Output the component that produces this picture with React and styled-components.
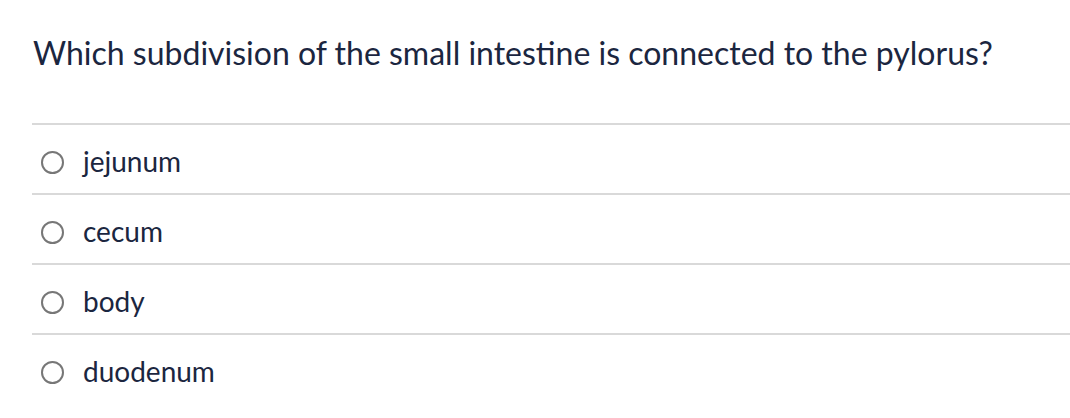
import React from "react";
import styled, { createGlobalStyle } from "styled-components";

const GlobalStyle = createGlobalStyle`
  html, body {
    margin: 0;
    padding: 0;
    background: #ffffff;
  }
  body {
    font-family: Lato, "Noto Sans", sans-serif;
    color: #1b2640;
  }
`;

const Wrapper = styled.div`
  padding: 30px 0 0 32px;
`;

const Question = styled.h1`
  margin: 0 0 0 1px;
  font-size: 32px;
  font-weight: 400;
  line-height: 46px;
  height: 93px;
`;

const Options = styled.div`
  display: flex;
  flex-direction: column;
`;

const Option = styled.label`
  display: flex;
  align-items: center;
  gap: 19px;
  height: 64px;
  padding: 4px 0 0 9px;
  border-top: 2px solid #d9d9d9;
  font-size: 28px;
  cursor: pointer;
`;

const Radio = styled.input.attrs({ type: "radio" })`
  appearance: none;
  -webkit-appearance: none;
  display: block;
  box-sizing: border-box;
  width: 23px;
  min-width: 23px;
  height: 23px;
  margin: 3px 0 0 0;
  padding: 0;
  border-radius: 50%;
  border: 2px solid #777777;
  background: #ffffff;
  flex: none;
`;

const Label = styled.span`
  line-height: 1;
`;

const answers = ["jejunum", "cecum", "body", "duodenum"];

const App = () => {
  return (
    <Wrapper>
      <GlobalStyle />
      <Question>
        Which subdivision of the small intestine is connected to the pylorus?
      </Question>
      <Options>
        {answers.map((a) => (
          <Option key={a}>
            <Radio name="answer" value={a} />
            <Label>{a}</Label>
          </Option>
        ))}
      </Options>
    </Wrapper>
  );
};

export default App;
